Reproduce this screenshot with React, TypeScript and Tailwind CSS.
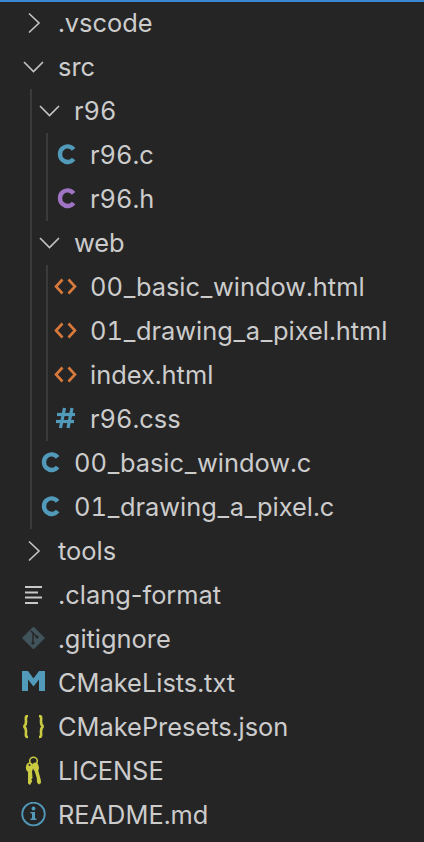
import { ReactNode } from "react";

const ChevronRight = () => (
  <svg width="27" height="24" viewBox="0 0 27 24" fill="none" stroke="#c5c5c5" strokeWidth="1.6">
    <path d="M9 2.5 L19 12 L9 21.5" />
  </svg>
);

const ChevronDown = () => (
  <svg width="27" height="24" viewBox="0 0 27 24" fill="none" stroke="#c5c5c5" strokeWidth="1.6">
    <path d="M4 7 L13.5 16.5 L23 7" />
  </svg>
);

const CIcon = ({ color }: { color: string }) => (
  <svg width="27" height="24" viewBox="0 0 27 24" fill="none" stroke={color} strokeWidth="4.4">
    <path d="M21.6 6.4 A7.6 7.8 0 1 0 21.6 16" />
  </svg>
);

const HtmlIcon = () => (
  <svg width="27" height="24" viewBox="0 0 27 24" fill="none" stroke="#d9793a" strokeWidth="2.6">
    <path d="M10.5 4.5 L4 11.5 L10.5 18.5" />
    <path d="M16.5 4.5 L23 11.5 L16.5 18.5" />
  </svg>
);

const HashIcon = () => (
  <svg width="27" height="24" viewBox="0 0 27 24" fill="none" stroke="#519aba" strokeWidth="3.2">
    <path d="M12.5 1 L8.5 21" />
    <path d="M20 1 L16 21" />
    <path d="M5 7.5 H23" />
    <path d="M4 14.5 H22" />
  </svg>
);

const LinesIcon = () => (
  <svg width="27" height="24" viewBox="0 0 27 24" fill="none" stroke="#c8c8c8" strokeWidth="2">
    <path d="M5 4 H22" />
    <path d="M5 9.5 H18" />
    <path d="M5 14.5 H22" />
    <path d="M5 20 H18" />
  </svg>
);

const GitIcon = () => (
  <svg width="27" height="24" viewBox="0 0 27 24">
    <path d="M13.5 0 L24.5 11 L13.5 22 L2.5 11 Z" fill="#41535b" stroke="#41535b" strokeWidth="1" strokeLinejoin="round" />
    <path d="M11 4 L17 10 M13 6.5 V16" stroke="#252526" strokeWidth="1.4" fill="none" />
    <circle cx="13" cy="16" r="1.6" fill="#252526" />
    <circle cx="17" cy="10" r="1.6" fill="#252526" />
  </svg>
);

const MIcon = () => (
  <svg width="27" height="24" viewBox="0 0 27 24">
    <path d="M2 0 H8 L13.5 7.5 L19 0 H25 V20 H19 V8.5 L13.5 15.5 L8 8.5 V20 H2 Z" fill="#519aba" />
  </svg>
);

const BracesIcon = () => (
  <svg width="27" height="24" viewBox="0 0 27 24" fill="none" stroke="#cbcb41" strokeWidth="2.6">
    <path d="M8 1 C5 1 6 3.5 6 6.5 C6 9.5 5.5 11 3.5 11.5 C5.5 12 6 13.5 6 16.5 C6 19.5 5 22 8 22" />
    <path d="M19 1 C22 1 21 3.5 21 6.5 C21 9.5 21.5 11 23.5 11.5 C21.5 12 21 13.5 21 16.5 C21 19.5 22 22 19 22" />
  </svg>
);

const KeysIcon = () => (
  <svg width="27" height="30" viewBox="0 0 27 30">
    <circle cx="13.5" cy="5" r="3.8" fill="none" stroke="#cbcb41" strokeWidth="1.5" />
    <ellipse cx="9.5" cy="11.5" rx="3.6" ry="5" fill="#cbcb41" />
    <path d="M8 15 H12 L12.5 22 L11.3 23.5 L12.3 25 L10 29 L8 27.5 Z" fill="#cbcb41" />
    <ellipse cx="15.8" cy="11" rx="3" ry="4.6" transform="rotate(-12 15.8 11)" fill="#cbcb41" />
    <path d="M14.5 14.5 L18 13.5 L20.8 24 L21 27 L19 28.5 L17 26.5 L16.8 22 Z" fill="#cbcb41" />
    <circle cx="9.5" cy="9" r="1" fill="#252526" />
  </svg>
);

const InfoIcon = () => (
  <svg width="27" height="26" viewBox="0 0 27 26">
    <circle cx="13.5" cy="12" r="11.3" fill="none" stroke="#519aba" strokeWidth="1.8" />
    <circle cx="13.5" cy="6.5" r="1.9" fill="#519aba" />
    <path d="M10.5 10 H15 V16.5 H16.5 V18 H10.5 V16.5 H12 V11.5 H10.5 Z" fill="#519aba" />
  </svg>
);

// underscores are wider in the original font, so they get a bit of margin
const Label = ({ text }: { text: string }) => (
  <div
    className={
      text.includes("-")
        ? "whitespace-nowrap text-[25.4px] text-[#cccccc]"
        : "whitespace-nowrap text-[25.4px] text-[#cccccc] tabular-nums"
    }
  >
    {text.split("_").map((part, i) => (
      <span key={i}>
        {i > 0 && <span className="mx-[0.7px]">_</span>}
        {part}
      </span>
    ))}
  </div>
);

const Row = ({ icon, label, inner }: { icon: ReactNode; label: string; inner?: boolean }) => (
  <div className={inner ? "flex h-[44px] items-center pl-[4px]" : "flex h-[44px] items-center pl-[20px]"}>
    <div className="flex w-[38px] shrink-0">
      <div className="flex w-[27px] justify-center">{icon}</div>
    </div>
    <Label text={label} />
  </div>
);

export default function App() {
  return (
    <div className="h-[842px] w-[424px] overflow-hidden bg-[#252526] font-['Inter',sans-serif]">
      <div className="h-[2px] bg-[#3a88d4]" />
      <div className="-mt-[1px]">
        <Row icon={<ChevronRight />} label=".vscode" />
        <Row icon={<ChevronDown />} label="src" />
        <div className="ml-[30px] border-l-2 border-[#3b3b3c]">
          <Row inner icon={<ChevronDown />} label="r96" />
          <div className="ml-[14px] border-l-2 border-[#3b3b3c]">
            <Row inner icon={<CIcon color="#519aba" />} label="r96.c" />
            <Row inner icon={<CIcon color="#a074c4" />} label="r96.h" />
          </div>
          <Row inner icon={<ChevronDown />} label="web" />
          <div className="ml-[14px] border-l-2 border-[#3b3b3c]">
            <Row inner icon={<HtmlIcon />} label="00_basic_window.html" />
            <Row inner icon={<HtmlIcon />} label="01_drawing_a_pixel.html" />
            <Row inner icon={<HtmlIcon />} label="index.html" />
            <Row inner icon={<HashIcon />} label="r96.css" />
          </div>
          <Row inner icon={<CIcon color="#519aba" />} label="00_basic_window.c" />
          <Row inner icon={<CIcon color="#519aba" />} label="01_drawing_a_pixel.c" />
        </div>
        <Row icon={<ChevronRight />} label="tools" />
        <Row icon={<LinesIcon />} label=".clang-format" />
        <Row icon={<GitIcon />} label=".gitignore" />
        <Row icon={<MIcon />} label="CMakeLists.txt" />
        <Row icon={<BracesIcon />} label="CMakePresets.json" />
        <Row icon={<KeysIcon />} label="LICENSE" />
        <Row icon={<InfoIcon />} label="README.md" />
      </div>
    </div>
  );
}
